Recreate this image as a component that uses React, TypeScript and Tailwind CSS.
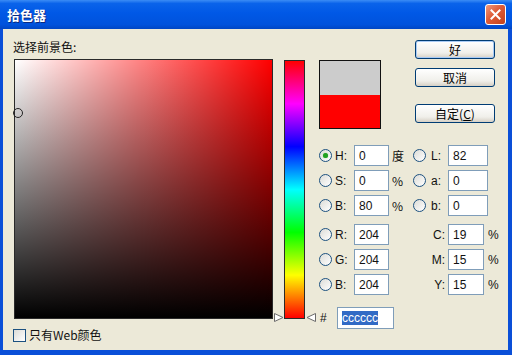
const cjk = '"Noto Sans CJK SC", sans-serif';
const latin = '"Liberation Sans", "Noto Sans CJK SC", sans-serif';

function Radio({ checked = false }: { checked?: boolean }) {
  return (
    <span className="flex h-[13px] w-[13px] shrink-0 items-center justify-center rounded-full border border-[#1c5180] bg-[linear-gradient(135deg,#dcdcd7,#ffffff)]">
      {checked && <span className="h-[5px] w-[5px] rounded-full bg-[#21a121] shadow-[0_0_1px_#5ec45e]" />}
    </span>
  );
}

function Field({ value, w }: { value: string; w: string }) {
  return (
    <div className={`flex h-[21px] ${w} items-center border border-[#7f9db9] bg-white pl-[4px] text-[12px] text-[#111]`}>
      {value}
    </div>
  );
}

function XpButton({ children, primary = false }: { children: React.ReactNode; primary?: boolean }) {
  return (
    <button
      type="button"
      className={`flex h-[19px] w-[80px] items-center justify-center rounded-[3px] border border-[#003c74] bg-[linear-gradient(to_bottom,#ffffff,#f0efea_70%,#d6d0c5)] text-[12px] leading-none text-black ${
        primary ? "shadow-[inset_0_0_0_1px_#a9cbf5]" : ""
      }`}
      style={{ fontFamily: cjk }}
    >
      {children}
    </button>
  );
}

function HsbRow({ a, av, unit, b, bv, checked }: { a: string; av: string; unit: string; b: string; bv: string; checked?: boolean }) {
  return (
    <div className="flex h-[21px] items-center">
      <Radio checked={checked} />
      <span className="w-[22px] pl-[3px]">{a}</span>
      <Field value={av} w="w-[35px]" />
      <span className="w-[24px] pl-[3px]" style={{ fontFamily: cjk }}>{unit}</span>
      <Radio />
      <span className="w-[22px] pl-[5px]">{b}</span>
      <Field value={bv} w="w-[40px]" />
    </div>
  );
}

function RgbRow({ a, av, c, cv }: { a: string; av: string; c: string; cv: string }) {
  return (
    <div className="flex h-[21px] items-center">
      <Radio />
      <span className="w-[22px] pl-[3px]">{a}</span>
      <Field value={av} w="w-[35px]" />
      <span className="w-[59px] pr-[3px] text-right">{c}</span>
      <Field value={cv} w="w-[36px]" />
      <span className="ml-[4px]">%</span>
    </div>
  );
}

function Marker({ flip }: { flip?: boolean }) {
  return (
    <svg width="10" height="9" viewBox="0 0 10 9" className={`absolute top-[252px] ${flip ? "left-[21px]" : "left-[-11px]"}`}>
      {flip ? (
        <polygon points="9.5,0.5 9.5,8.5 1,4.5" fill="#fff" stroke="#6b6b6b" />
      ) : (
        <polygon points="0.5,0.5 0.5,8.5 9,4.5" fill="#fff" stroke="#6b6b6b" />
      )}
    </svg>
  );
}

export default function App() {
  return (
    <div className="flex h-[355px] w-[512px] flex-col overflow-hidden bg-[#0a4fd8]" style={{ fontFamily: latin }}>
      <div className="flex h-[29px] shrink-0 items-center justify-between bg-[linear-gradient(to_bottom,#3b8cf5_0%,#0a63ea_12%,#0058e6_45%,#0052dc_85%,#0046c4_100%)] pl-[7px] pr-[6px]">
        <span className="text-[13px] font-bold text-white [text-shadow:1px_1px_0_#0a2a80]" style={{ fontFamily: cjk }}>
          拾色器
        </span>
        <div className="flex h-[21px] w-[21px] items-center justify-center rounded-[3px] border border-white bg-[linear-gradient(135deg,#ee9a7e,#de5b37_45%,#c2411b)]">
          <svg width="11" height="11" viewBox="0 0 11 11">
            <path d="M1.5 1.5 L9.5 9.5 M9.5 1.5 L1.5 9.5" stroke="#fff" strokeWidth="2" strokeLinecap="square" />
          </svg>
        </div>
      </div>

      <div className="mx-[3px] mb-[5px] mr-[4px] flex flex-1 items-start bg-[#ece9d8] text-[12px] text-[#111]">
        <div className="ml-[10px] flex w-[260px] flex-col">
          <div className="mt-[11px] h-[14px] leading-[14px]" style={{ fontFamily: cjk }}>
            选择前景色:
          </div>
          <div className="relative ml-[1px] mt-[5px] h-[260px] w-[259px] border border-[#2a2a2a] bg-[#ff0000]">
            <div className="h-full w-full bg-[linear-gradient(to_right,#ffffff,rgba(255,255,255,0))]">
              <div className="h-full w-full bg-[linear-gradient(to_bottom,rgba(0,0,0,0),#000000)]" />
            </div>
            <span className="absolute left-[-2px] top-[48px] h-[10px] w-[10px] rounded-full border border-[#222]" />
          </div>
          <div className="mt-[9px] flex h-[14px] items-center">
            <span className="h-[13px] w-[13px] border border-[#1c5180] bg-[linear-gradient(135deg,#dcdcd7,#ffffff)]" />
            <span className="ml-[3px] leading-[14px]" style={{ fontFamily: cjk }}>只有Web颜色</span>
          </div>
        </div>

        <div className="relative ml-[11px] mt-[31px] h-[259px] w-[21px] border border-[#2a2a2a] bg-[linear-gradient(to_bottom,#ff0000,#ff00ff_16.67%,#0000ff_33.33%,#00ffff_50%,#00ff00_66.67%,#ffff00_83.33%,#ff0000)]">
          <Marker />
          <Marker flip />
        </div>

        <div className="ml-[14px] flex flex-col">
          <div className="mt-[11px] flex items-start">
            <div className="mt-[20px] flex h-[69px] w-[62px] flex-col border border-[#111]">
              <div className="flex-1 bg-[#cccccc]" />
              <div className="flex-1 bg-[#ff0000]" />
            </div>
            <div className="ml-[34px] flex flex-col">
              <XpButton primary>好</XpButton>
              <div className="mt-[9px]">
                <XpButton>取消</XpButton>
              </div>
              <div className="mt-[17px]">
                <XpButton>
                  自定(<span className="underline">C</span>)
                </XpButton>
              </div>
            </div>
          </div>

          <div className="mt-[16px] flex flex-col gap-[4px]">
            <HsbRow a="H:" av="0" unit="度" b="L:" bv="82" checked />
            <HsbRow a="S:" av="0" unit="%" b="a:" bv="0" />
            <HsbRow a="B:" av="80" unit="%" b="b:" bv="0" />
          </div>

          <div className="mt-[8px] flex flex-col gap-[4px]">
            <RgbRow a="R:" av="204" c="C:" cv="19" />
            <RgbRow a="G:" av="204" c="M:" cv="15" />
            <RgbRow a="B:" av="204" c="Y:" cv="15" />
          </div>

          <div className="mt-[12px] flex h-[22px] items-center">
            <span className="w-[18px] pl-[1px]">#</span>
            <div className="flex h-[22px] w-[57px] items-center border border-[#7f9db9] bg-white pl-[4px]">
              <span className="bg-[#316ac5] leading-[14px] text-white">cccccc</span>
            </div>
          </div>
        </div>
      </div>
    </div>
  );
}
